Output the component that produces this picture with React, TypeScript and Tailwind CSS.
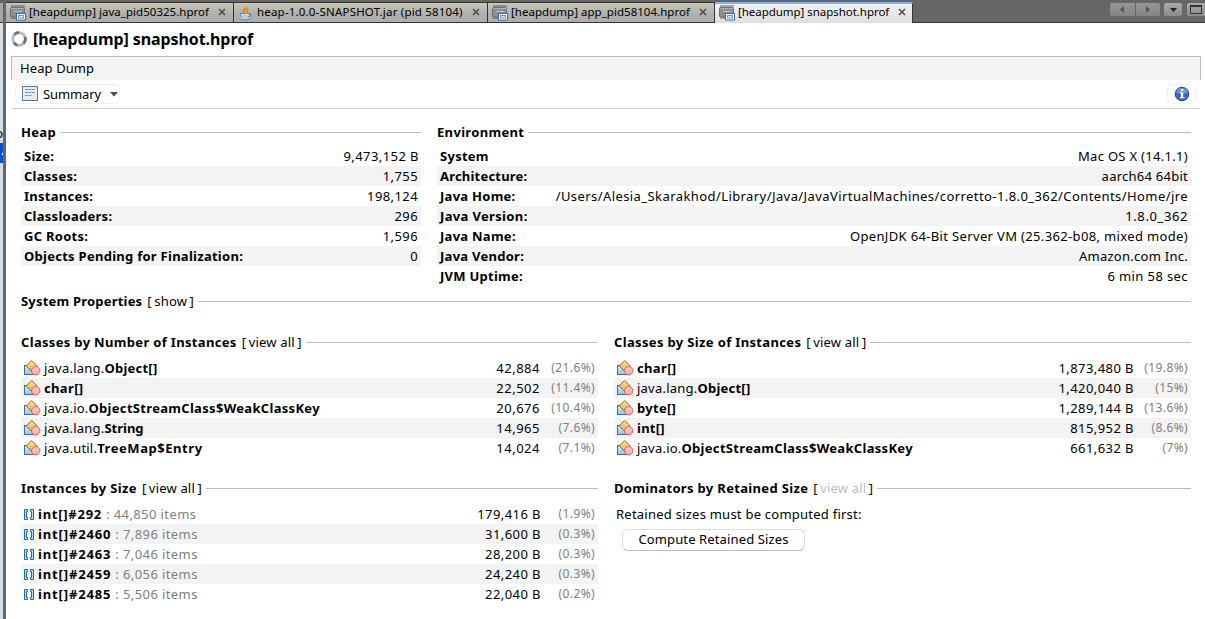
import React from 'react';

const HeapIcon = () => (
  <svg width="16" height="16" viewBox="0 0 16 16" className="block shrink-0">
    <path d="M1.500 1h13M1.500 13h5" stroke="#5c5c5c" strokeWidth="2" strokeDasharray="1 1" />
    <rect x="0.500" y="2.500" width="14" height="9.500" rx="1" fill="#8e8e8e" stroke="#707070" />
    <path d="M1 3.500h13" stroke="#b0b0b0" />
    <path d="M4 6.500h8" stroke="#bdbdbd" />
    <rect x="6.500" y="8.500" width="9" height="6.500" fill="#fff" stroke="#4168b8" />
    <rect x="8.500" y="10.500" width="5" height="2.500" fill="#dbe8fb" stroke="#6b96dc" />
  </svg>
);

const JavaIcon = () => (
  <svg width="16" height="16" viewBox="0 0 16 16" className="block shrink-0">
    <path d="M2.500 8.500H11.500C11.500 11 10.500 12.500 9.500 13H4.500C3.500 12.500 2.500 11 2.500 8.500Z" fill="#dce9f3" stroke="#54809f" />
    <path d="M9 0C9 2 4 3.500 5 6.500C5.500 8 6.500 8.500 7.500 10C8.500 9 10.500 8 10 6C9.800 5 10 4 11 3C9.500 3.300 8.500 4 8.300 5C8 4 9.800 2.500 9 0Z" fill="#f28018" />
    <path d="M8 5C7 6 8 7 7.800 8.500" stroke="#fbc27c" fill="none" />
    <path d="M11.500 9C14.500 8.500 14 11.500 10.700 11.500" fill="none" stroke="#54809f" />
    <path d="M0.500 12.500C3 15.800 11 15.800 13.500 12.500" fill="#c4d8e6" stroke="#54809f" />
    <path d="M4 11h6" stroke="#8fb2cb" />
  </svg>
);

const ClassIcon = () => (
  <svg width="17" height="16" viewBox="0 0 17 16" className="block shrink-0">
    <defs>
      <linearGradient id="sq" x1="0" y1="0" x2="0" y2="1"><stop offset="0" stopColor="#d8eefb" /><stop offset="1" stopColor="#8ec6ec" /></linearGradient>
      <linearGradient id="di" x1="0" y1="0" x2="0" y2="1"><stop offset="0" stopColor="#fbe3a4" /><stop offset="1" stopColor="#e5b04c" /></linearGradient>
      <linearGradient id="ci" x1="0" y1="0" x2="0" y2="1"><stop offset="0" stopColor="#ffd0cc" /><stop offset="1" stopColor="#fba5a3" /></linearGradient>
    </defs>
    <rect x="0.500" y="5.500" width="9" height="9" fill="url(#sq)" stroke="#3c6e9c" />
    <path d="M7.700 0.500L13.200 6L7.700 11.500L2.200 6Z" fill="url(#di)" stroke="#94661c" />
    <circle cx="11.700" cy="10.800" r="4.200" fill="url(#ci)" stroke="#cf5f66" />
  </svg>
);

const ArrayIcon = () => (
  <svg width="11" height="11" viewBox="0 0 11 11" className="block shrink-0">
    <path d="M0.500 0.500H3.500V2.500H2.500V8.500H3.500V10.500H0.500Z" fill="#b9dcf5" stroke="#2468a8" />
    <path d="M9.500 0.500H6.500V2.500H7.500V8.500H6.500V10.500H9.500Z" fill="#b9dcf5" stroke="#2468a8" />
  </svg>
);

const CloseIcon = () => (
  <svg width="8" height="8" viewBox="0 0 8 8" className="block shrink-0">
    <path d="M1 1L7 7M7 1L1 7" stroke="#4c4c4c" strokeWidth="1.600" />
  </svg>
);

const tabs = [
  { label: '[heapdump] java_pid50325.hprof', java: false, box: 'w-[228px]', track: 'tracking-[0.030px]' },
  { label: 'heap-1.0.0-SNAPSHOT.jar (pid 58104)', java: true, box: 'w-[254px]', track: 'tracking-[0.190px]' },
  { label: '[heapdump] app_pid58104.hprof', java: false, box: 'w-[227px]', track: 'tracking-[0.030px]' },
];

type Fact = { k: string; v: string; kt?: string; vt?: string };

const heap: Fact[] = [
  { k: 'Size:', v: '9,473,152 B', vt: '-mr-px tracking-[0.430px]' },
  { k: 'Classes:', v: '1,755' },
  { k: 'Instances:', v: '198,124' },
  { k: 'Classloaders:', v: '296' },
  { k: 'GC Roots:', v: '1,596' },
  { k: 'Objects Pending for Finalization:', v: '0' },
];

const environment: Fact[] = [
  { k: 'System', v: 'Mac OS X (14.1.1)', vt: 'tracking-[0.300px]' },
  { k: 'Architecture:', v: 'aarch64 64bit', kt: 'tracking-[0.200px]', vt: 'tracking-[0.250px]' },
  { k: 'Java Home:', v: '/Users/Alesia_Skarakhod/Library/Java/JavaVirtualMachines/corretto-1.8.0_362/Contents/Home/jre', vt: 'tracking-[0.420px]' },
  { k: 'Java Version:', v: '1.8.0_362', kt: 'tracking-[0.350px]', vt: 'tracking-[0.600px]' },
  { k: 'Java Name:', v: 'OpenJDK 64-Bit Server VM (25.362-b08, mixed mode)', vt: 'tracking-[0.350px]' },
  { k: 'Java Vendor:', v: 'Amazon.com Inc.', vt: 'tracking-[0.270px]' },
  { k: 'JVM Uptime:', v: '6 min 58 sec' },
];

type Item = { pre?: string; name: string; post?: string; value: string; pct: string; track?: string };

const byCount: Item[] = [
  { pre: 'java.lang.', name: 'Object[]', value: '42,884', pct: '(21.6%)' },
  { name: 'char[]', value: '22,502', pct: '(11.4%)', track: 'tracking-[0.350px]' },
  { pre: 'java.io.', name: 'ObjectStreamClass$WeakClassKey', value: '20,676', pct: '(10.4%)', track: 'tracking-[0.310px]' },
  { pre: 'java.lang.', name: 'String', value: '14,965', pct: '(7.6%)', track: 'tracking-[0.000px]' },
  { pre: 'java.util.', name: 'TreeMap$Entry', value: '14,024', pct: '(7.1%)', track: 'tracking-[0.560px]' },
];

const bySize: Item[] = [
  { name: 'char[]', value: '1,873,480 B', pct: '(19.8%)', track: 'tracking-[0.350px]' },
  { pre: 'java.lang.', name: 'Object[]', value: '1,420,040 B', pct: '(15%)' },
  { name: 'byte[]', value: '1,289,144 B', pct: '(13.6%)', track: 'tracking-[0.300px]' },
  { name: 'int[]', value: '815,952 B', pct: '(8.6%)' },
  { pre: 'java.io.', name: 'ObjectStreamClass$WeakClassKey', value: '661,632 B', pct: '(7%)', track: 'tracking-[0.310px]' },
];

const instances: Item[] = [
  { name: 'int[]#292', post: ': 44,850 items', value: '179,416 B', pct: '(1.9%)', track: 'tracking-[0.750px]' },
  { name: 'int[]#2460', post: ': 7,896 items', value: '31,600 B', pct: '(0.3%)', track: 'tracking-[0.860px]' },
  { name: 'int[]#2463', post: ': 7,046 items', value: '28,200 B', pct: '(0.3%)', track: 'tracking-[0.860px]' },
  { name: 'int[]#2459', post: ': 6,056 items', value: '24,240 B', pct: '(0.3%)', track: 'tracking-[0.860px]' },
  { name: 'int[]#2485', post: ': 5,506 items', value: '22,040 B', pct: '(0.2%)', track: 'tracking-[0.860px]' },
];

function Heading({ title, link, disabled, track = 'tracking-[0.330px]' }: { title: string; link?: string; disabled?: boolean; track?: string }) {
  return (
    <div className="flex h-5 items-center">
      <span className={`font-bold ${track}`}>{title}</span>
      {link && (
        <span className="ml-[5px] flex gap-[2.500px] tracking-[0.180px]">
          <span>[</span>
          <span className={disabled ? 'text-[#bdbdbd]' : ''}>{link}</span>
          <span>]</span>
        </span>
      )}
      <div className="ml-1 h-px flex-1 bg-[#bcbcbc]" />
    </div>
  );
}

function Facts({ rows }: { rows: Fact[] }) {
  return (
    <div className="mt-1">
      {rows.map((r) => (
        <div key={r.k} className="flex h-5 items-center justify-between pr-[3px] pl-[3px] even:bg-[#f3f3f3]">
          <span className={`font-bold ${r.kt ?? 'tracking-[0.270px]'}`}>{r.k}</span>
          <span className={r.vt ?? 'tracking-[0.400px]'}>{r.v}</span>
        </div>
      ))}
    </div>
  );
}

function Items({ rows, array }: { rows: Item[]; array?: boolean }) {
  return (
    <div className="mt-1.5">
      {rows.map((r) => (
        <div key={r.name + r.value} className="flex h-5 items-center pr-[3px] pl-[3px] even:bg-[#f3f3f3]">
          {array ? <ArrayIcon /> : <ClassIcon />}
          <span className="ml-[3px]">
            {r.pre && <span className="tracking-[0.220px]">{r.pre}</span>}
            <span className={`font-bold ${r.track ?? 'tracking-[0.250px]'}`}>{r.name}</span>
          </span>
          {r.post && <span className="ml-1 tracking-[0.400px] text-[#808080]">{r.post}</span>}
          <span className={r.value.endsWith('B') ? '-mr-px ml-auto tracking-[0.430px]' : 'ml-auto tracking-[0.500px]'}>{r.value}</span>
          <span className="w-[55px] text-right text-[12px] tracking-[0.380px] text-[#808080]">{r.pct}</span>
        </div>
      ))}
    </div>
  );
}

export default function App() {
  return (
    <div className="flex h-[619px] w-[1205px] overflow-hidden bg-white font-['Noto_Sans',sans-serif] text-[13px] leading-5 whitespace-nowrap text-black">
      <div className="flex w-[3px] shrink-0 flex-col overflow-hidden bg-[#d5dde6]">
        <div className="h-[3px] bg-[#666]" />
        <div className="h-5 border-b border-[#333] bg-[#a4a4a4]" />
        <div className="flex h-[120px] items-end justify-end">
          <span>o</span>
        </div>
        <div className="h-5 bg-[#0a50d8]">
          <svg width="3" height="20" className="block"><path d="M3 9L1.500 12H3Z" fill="#fff" /></svg>
        </div>
      </div>
      <div className="w-[3px] shrink-0 bg-[#666]" />

      <div className="flex min-w-0 flex-1 flex-col">
        <div className="flex h-[23px] shrink-0 border-b border-[#333] bg-[#666]">
          <div className="flex pt-[2px] text-[11.5px] leading-[18px]">
            {tabs.map((t) => (
              <div key={t.label} className={`flex items-center border-t border-r border-[#333] bg-linear-to-b from-[#c8c9b6] to-[#aeaeae] to-60% pl-1 ${t.box}`}>
                {t.java ? <JavaIcon /> : <HeapIcon />}
                <span className={`ml-[3px] pb-[2px] ${t.track}`}>{t.label}</span>
                <span className="mr-[7px] ml-auto pb-px"><CloseIcon /></span>
              </div>
            ))}
            <div className="-mb-px flex w-[198px] items-center border-t-2 border-r border-t-[#7fb2f5] border-r-[#333] bg-linear-to-b from-[#f2f2f2] to-[#dedede] pb-[2px] pl-1">
              <HeapIcon />
              <span className="ml-[3px] pb-[2px] tracking-[-0.040px]">[heapdump] snapshot.hprof</span>
              <span className="mr-[6px] ml-auto pb-px"><CloseIcon /></span>
            </div>
          </div>
          <div className="mt-[3px] ml-auto flex h-[13px]">
            <div className="flex w-[50px] overflow-hidden rounded-[2px] bg-linear-to-b from-[#959595] to-[#858585]">
              <div className="flex flex-1 items-center justify-center border-r border-[#666]">
                <svg width="4" height="7"><path d="M4 0V7L0 3.500Z" fill="#555" /></svg>
              </div>
              <div className="flex flex-1 items-center justify-center">
                <svg width="4" height="7"><path d="M0 0V7L4 3.500Z" fill="#555" /></svg>
              </div>
            </div>
            <div className="ml-1 flex w-[18px] items-center justify-center rounded-[2px] bg-linear-to-b from-[#aaa] to-[#8c8c8c]">
              <svg width="7" height="4"><path d="M0 0H7L3.500 4Z" fill="#222" /></svg>
            </div>
            <div className="ml-[5px] flex w-[18px] items-center rounded-l-[2px] bg-linear-to-b from-[#aaa] to-[#8c8c8c] pl-[3px]">
              <div className="h-[9px] w-3 border border-t-2 border-[#333]" />
            </div>
          </div>
        </div>

        <div className="flex h-[33px] shrink-0 items-center pb-[2px] pl-[5px]">
          <svg width="16" height="16" viewBox="0 0 16 16" className="block">
            <circle cx="8" cy="8" r="6.300" fill="none" stroke="#b7bac2" strokeWidth="2.800" />
            <path d="M3.400 3.400A6.300 6.300 0 0 1 8 1.700M14 6A6.300 6.300 0 0 1 12.500 12.500M2.900 11.800A6.300 6.300 0 0 0 6.500 14.100" fill="none" stroke="#6d717b" strokeWidth="2.800" />
          </svg>
          <span className="ml-1.5 text-[16px] font-bold tracking-[-0.080px]">[heapdump] snapshot.hprof</span>
        </div>

        <div className="mr-1 ml-[5px] flex h-6 shrink-0 items-center border border-b-0 border-[#bbb] bg-[#f4f4f4] pb-px pl-2 tracking-[0.100px]">Heap Dump</div>

        <div className="mr-[5px] ml-1.5 flex h-[29px] shrink-0 items-center border-b border-[#ccc]">
          <div className="ml-[3px] flex h-5 w-[105px] items-center rounded-[5px] border border-[#f0f0f0] pl-1.5">
            <svg width="16" height="16" viewBox="0 0 16 16" className="block">
              <rect x="0.500" y="0.500" width="15" height="14" fill="#e3edf6" stroke="#66788c" />
              <path d="M3 3.500h10M3 6.500h10M3 9.500h7" stroke="#8292a8" strokeDasharray="3 0.500" />
            </svg>
            <span className="ml-[5px] tracking-[-0.100px]">Summary</span>
            <svg width="8" height="5" className="mr-[1.500px] ml-auto block"><path d="M0 0H8L4 4.500Z" fill="#4d4d4d" /></svg>
          </div>
          <div className="mr-[3px] ml-auto flex h-5 w-[30px] items-center justify-center rounded-[5px] border border-[#f0f0f0]">
            <svg width="16" height="16" viewBox="0 0 16 16" className="block">
              <circle cx="8" cy="8" r="6.800" fill="#3a66c0" stroke="#27489c" />
              <path d="M2 6.500A6.300 6.300 0 0 1 14 6.500Q8 8.500 2 6.500Z" fill="#6f97dc" />
              <path d="M7 3h2.200v2H7zM6 6.200h3.200v4.800h1.200v1.300H5.800V11H7V7.400H6z" fill="#fff" />
            </svg>
          </div>
        </div>

        <div className="flex flex-1 flex-col pt-[13px] pr-[14px] pl-[15px]">
          <div className="grid grid-cols-[400px_754px] gap-4">
            <section>
              <Heading title="Heap" />
              <Facts rows={heap} />
            </section>
            <section>
              <Heading title="Environment" />
              <Facts rows={environment} />
            </section>
          </div>
          <div className="mt-[5px]">
            <Heading title="System Properties" link="show" track="tracking-[0.200px]" />
          </div>
          <div className="mt-[21px] grid grid-cols-2 gap-x-4 gap-y-5">
            <section>
              <Heading title="Classes by Number of Instances" link="view all" />
              <Items rows={byCount} />
            </section>
            <section>
              <Heading title="Classes by Size of Instances" link="view all" track="tracking-[0.350px]" />
              <Items rows={bySize} />
            </section>
            <section>
              <Heading title="Instances by Size" link="view all" />
              <Items rows={instances} array />
            </section>
            <section>
              <Heading title="Dominators by Retained Size" link="view all" disabled />
              <div className="mt-1.5 h-5 pl-[2px] tracking-[0.240px]">Retained sizes must be computed first:</div>
              <button className="mt-[5px] ml-2 flex h-[22px] w-[183px] items-center justify-center rounded-[6px] border border-[#dedede] border-b-[#bdbdbd] bg-white pb-[2px] tracking-[0.130px]">
                Compute Retained Sizes
              </button>
            </section>
          </div>
        </div>
      </div>
    </div>
  );
}
